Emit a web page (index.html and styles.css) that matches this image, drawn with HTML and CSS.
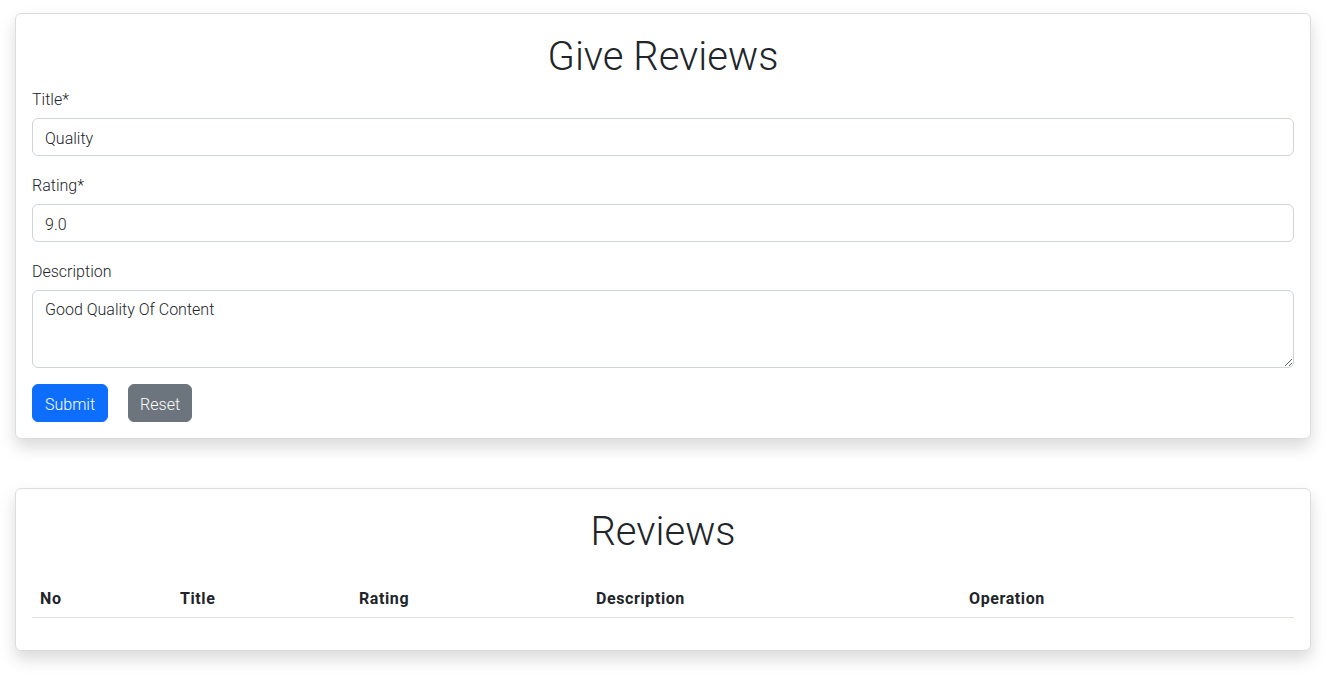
FILE: index.html
```html
<!DOCTYPE html>
<html lang="en">
<head>
<meta charset="utf-8">
<title>Reviews</title>
<link rel="stylesheet" href="styles.css">
</head>
<body>
<main class="page">
  <section class="card">
    <h1 class="card-title">Give Reviews</h1>
    <form class="review-form">
      <div class="field">
        <label class="field-label" for="title">Title*</label>
        <input class="field-control" id="title" type="text" value="Quality">
      </div>
      <div class="field">
        <label class="field-label" for="rating">Rating*</label>
        <input class="field-control" id="rating" type="text" value="9.0">
      </div>
      <div class="field">
        <label class="field-label" for="desc">Description</label>
        <textarea class="field-control field-area" id="desc" rows="3">Good Quality Of Content</textarea>
      </div>
      <div class="actions">
        <button type="button" class="btn btn-primary">Submit</button>
        <button type="reset" class="btn btn-secondary">Reset</button>
      </div>
    </form>
  </section>

  <section class="card card-list">
    <h1 class="card-title">Reviews</h1>
    <table class="table">
      <thead>
        <tr>
          <th class="col-no">No</th>
          <th class="col-title">Title</th>
          <th class="col-rating">Rating</th>
          <th class="col-desc">Description</th>
          <th class="col-op">Operation</th>
        </tr>
      </thead>
      <tbody></tbody>
    </table>
  </section>
</main>
</body>
</html>
```
FILE: styles.css
```css
* { box-sizing: border-box; }
html, body { margin: 0; padding: 0; background: #fff; }
body {
  font-family: Roboto, "Liberation Sans", sans-serif;
  font-size: 16px;
  line-height: 1.5;
  color: #212529;
}
.page {
  padding: 13px 21px 30px 15px;
  display: flex;
  flex-direction: column;
  gap: 49px;
}
.card {
  border: 1px solid #dcdcdc;
  border-radius: 6px;
  background: #fff;
  padding: 16px;
  box-shadow: 0 8px 16px rgba(0,0,0,0.15);
}
.card-title {
  margin: 0 0 8px;
  padding-top: 3px;
  height: 48px;
  font-size: 40px;
  font-weight: 300;
  line-height: 48px;
  text-align: center;
}
.review-form { display: flex; flex-direction: column; gap: 16px; }
.field { display: flex; flex-direction: column; }
.field-label { margin-bottom: 8px; line-height: 24px; font-weight: 300; padding-top: 2px; height: 24px; }
.field-control {
  display: block;
  width: 100%;
  height: 38px;
  padding: 7px 12px 5px;
  font: inherit;
  font-weight: 300;
  color: #212529;
  border: 1px solid #ced4da;
  border-radius: 6px;
  background: #fff;
}
.field-area { height: 78px; resize: vertical; }
.actions { display: flex; gap: 20px; }
.btn {
  font: inherit;
  font-weight: 300;
  height: 38px;
  padding: 8px 12px 4px;
  border: 1px solid transparent;
  border-radius: 6px;
  color: #fff;
}
.btn-primary { background: #0d6efd; border-color: #0d6efd; }
.btn-secondary { background: #6c757d; border-color: #6c757d; padding-left: 11px; padding-right: 11px; }
.card-list .card-title { margin-bottom: 24px; }
.table { width: 100%; border-collapse: collapse; margin-bottom: 16px; }
.table th {
  text-align: left;
  padding: 10px 8px 6px;
  font-weight: 700;
  letter-spacing: 0.6px;
  border-bottom: 1px solid #dee2e6;
}
.col-no { width: 140px; }
.col-title { width: 179px; }
.col-rating { width: 237px; }
.col-desc { width: 373px; }
```
